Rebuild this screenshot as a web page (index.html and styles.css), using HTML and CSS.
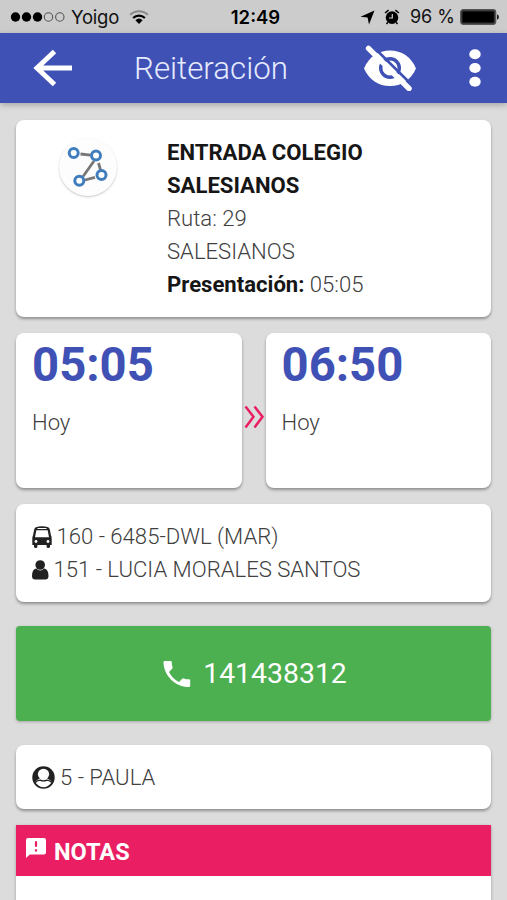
FILE: index.html
```html
<!DOCTYPE html>
<html lang="es">
<head>
<meta charset="utf-8">
<meta name="viewport" content="width=device-width, initial-scale=1">
<title>Reiteración</title>
<link rel="stylesheet" href="styles.css">
</head>
<body>
<div class="status">
  <div class="carrier">
    <svg class="signal" width="56" height="12" viewBox="0 0 56 12"><g fill="#000"><circle cx="5.5" cy="6" r="4.700"/><circle cx="16.500" cy="6" r="4.700"/><circle cx="27.500" cy="6" r="4.700"/></g><g fill="none" stroke="#555" stroke-width="1.100"><circle cx="38.500" cy="6" r="4.200"/><circle cx="49.800" cy="6" r="4.200"/></g></svg>
    <span class="carrier-name">Yoigo</span>
    <svg class="wifi" width="20" height="15" viewBox="0 0 20 15"><g fill="none" stroke-width="2.100"><path d="M1.200 4.800a12.800 12.800 0 0 1 17.600 0" stroke="#888"/><path d="M4.100 8a8.600 8.600 0 0 1 11.800 0" stroke="#000"/></g><path d="M6.400 10.200a5.400 5.400 0 0 1 7.200 0L10 14z"/></svg>
  </div>
  <span class="clock">12:49</span>
  <div class="power">
    <svg width="15" height="15" viewBox="0 0 15 15"><path d="M14.500.5 9 14.500 7.600 7.500.5 6.800z"/></svg>
    <svg class="alarm" width="16" height="16" viewBox="0 0 16 16"><circle cx="8" cy="8.600" r="6.300"/><path d="M1 4 4.600 1.200M11.400 1.200l3.600 2.800M3.800 13.300 2.600 15M12.200 13.300l1.200 1.700" stroke="#000" stroke-width="1.500"/><path d="M8.300 5v4H5" fill="none" stroke="#ccc" stroke-width="1.200"/></svg>
    <span class="percent">96 %</span>
    <svg width="40" height="16" viewBox="0 0 40 16"><rect x=".7" y=".7" width="35" height="14.600" rx="2.500" fill="#333" stroke="#555" stroke-width="1.200"/><rect x="2.500" y="2.500" width="31.400" height="11" rx="1"/><path d="M37 5.200q2 .6 2 2.800t-2 2.800z" fill="#222"/></svg>
  </div>
</div>
<header class="bar">
  <svg class="back" width="40" height="38" viewBox="0 0 40 38"><path d="M21.500 2.500 4 19l17.500 16.500M4 19h35" fill="none" stroke="#fff" stroke-width="5"/></svg>
  <h1>Reiteración</h1>
  <svg class="eye" width="54" height="46" viewBox="0 0 54 46"><path d="M1 23.500C6 11.500 15.500 5.500 27 5.500s21 6 26 18C48 35 38.500 41 27 41S6 35 1 23.500z" fill="#fff"/><circle cx="27" cy="23" r="9.300" fill="none" stroke="#3f51b5" stroke-width="3.400"/><path d="M9.500 1 51 42" stroke="#3f51b5" stroke-width="2.600"/><path d="M5.500 3.300 46 43.500" stroke="#fff" stroke-width="5.400" stroke-linecap="round"/></svg>
  <svg class="more" width="12" height="38" viewBox="0 0 12 38" fill="#fff"><ellipse cx="6" cy="5.200" rx="5.700" ry="5"/><ellipse cx="6" cy="19" rx="5.700" ry="5"/><ellipse cx="6" cy="32.800" rx="5.700" ry="5"/></svg>
</header>
<main>
  <section class="card route">
    <div class="badge"><svg width="58" height="58" viewBox="0 0 58 58"><path d="m21.500 16 10 1.200M35 23 24 38.500M39.500 25l2 7M26 42l10-2.700" stroke="#777" stroke-width="2.800" fill="none"/><g fill="#fff" stroke="#407dbd" stroke-width="3"><circle cx="14.700" cy="15" r="4.500"/><circle cx="37" cy="17.500" r="4.500"/><circle cx="42.500" cy="37" r="4.500"/><circle cx="20.300" cy="42.700" r="4.500"/></g></svg></div>
    <div class="info">
      <b class="name">ENTRADA COLEGIO SALESIANOS</b>
      <div>Ruta: 29</div>
      <div>SALESIANOS</div>
      <div><b>Presentación:</b> 05:05</div>
    </div>
  </section>
  <div class="times">
    <section class="card time"><strong>05:05</strong><span>Hoy</span></section>
    <svg class="next" width="24" height="24" viewBox="0 0 24 24"><path d="m3.500 1.500 8 10.300-8 10.700M12.500 1.500l8 10.300-8 10.700" fill="none" stroke="#e91e63" stroke-width="2.500"/></svg>
    <section class="card time"><strong>06:50</strong><span>Hoy</span></section>
  </div>
  <section class="card crew">
    <div class="row bus"><svg width="20" height="22" viewBox="0 0 20 22" fill="#212121"><path d="M3.800 1.300Q10-1 16.200 1.300q1.300.7 1.600 2.200L19 9.500q.7 1 .7 3V19H18v2q-.3.900-1.700.900t-1.700-.9v-2H5.400v2q-.3.900-1.700.900T2 21v-2H.3v-6.500q0-2 .7-3l1.200-6Q2.500 2 3.800 1.300z"/><path d="M5.500 2.500h9" stroke="#fff" stroke-width="1"/><path d="M4.300 4.300h11.400l1.300 6.900H3z" fill="#fff"/><circle cx="4" cy="15.500" r="1.400" fill="#fff"/><circle cx="16" cy="15.500" r="1.400" fill="#fff"/></svg><span>160 - 6485-DWL (MAR)</span></div>
    <div class="row driver"><svg width="17" height="20" viewBox="0 0 17 20" fill="#212121"><circle cx="8.200" cy="5" r="4.800"/><path d="M4.200 8.500Q8.200 12.300 12.200 8.500q4.300.8 4.300 7.500 0 3.500-3.300 3.500h-10Q0 19.500 0 16q0-6.700 4.200-7.500z"/></svg><span>151 - LUCIA MORALES SANTOS</span></div>
  </section>
  <button class="call" type="button"><svg width="28" height="28" viewBox="0 0 28 28"><path d="M1.500 1h6.200q1 0 1 1 0 2.800.9 5.200.2.900-.4 1.500L6 12q3.300 6.700 10 10l3.200-3.200q.7-.6 1.600-.4 2.400.9 5.200.9 1.200 0 1.200 1.200v5q0 1.500-1.400 1.500C12.200 27 .8 15.500.5 2.200Q.5 1 1.500 1z" fill="#fff"/></svg><span>141438312</span></button>
  <section class="card guide">
    <div class="row"><svg width="23" height="23" viewBox="0 0 23 23"><circle cx="11.500" cy="11.500" r="11.200" fill="#212121"/><circle cx="11.500" cy="8.300" r="5.600" fill="#fff"/><path d="M8.300 12.500Q5 13.300 3.600 15.500L4.200 17.200Q7.300 21.300 11.500 21.300T18.800 17.200L19.400 15.500Q18 13.300 14.700 12.500z" fill="#fff"/><path d="M3.500 16.200q2-1.900 4.700-2.100 3.300 1.700 6.600 0 2.700.2 4.700 2.100" fill="none" stroke="#212121" stroke-width="1.200"/></svg><span>5 - PAULA</span></div>
  </section>
  <section class="notes">
    <h2><svg width="20" height="20" viewBox="0 0 20 20"><path d="M2 0h16q2 0 2 2v12.500q0 2-2 2H3.800L0 20V2Q0 0 2 0z" fill="#fff"/><path d="M10 3.300v5.400M10 11.200v2.200" stroke="#e91e63" stroke-width="2.200"/></svg><span>NOTAS</span></h2>
    <div class="notes-body"></div>
  </section>
</main>
</body>
</html>
```
FILE: styles.css
```css
* { box-sizing: border-box; }
body {
  margin: 0;
  height: 900px;
  overflow: hidden;
  background: #dcdcdc;
  color: #404040;
  font: 300 22.1px/33px Roboto, sans-serif;
}
svg { display: block; flex: none; }
b { color: #161616; font-weight: 700; }
.status {
  display: grid;
  grid-template-columns: 1fr auto 1fr;
  align-items: center;
  height: 33px;
  padding: 1px 7px 0 10px;
  background: #ccc;
  color: #111;
  font: 400 18.5px/32px Inter, sans-serif;
}
.carrier, .power { display: flex; align-items: center; }
.carrier-name { margin: 0 10px 0 5px; letter-spacing: -.2px; }
.clock { padding-left: 1px; font-weight: 600; color: #000; }
.power { justify-content: flex-end; }
.alarm { margin: 0 10px 0 9px; }
.percent { margin-right: 5px; font-size: 18px; }
.bar {
  display: flex;
  align-items: center;
  height: 70px;
  padding: 0 26px 0 33px;
  background: #3f51b5;
  box-shadow: 0 2px 6px rgba(0, 0, 0, .25);
}
.bar h1 { margin: 1px 0 0 61px; font-size: 31.3px; font-weight: 300; line-height: 40px; color: #e6ebff; }
.eye { margin-left: auto; }
.more { margin-left: 52px; }
main { display: flex; flex-direction: column; padding: 17px 16px 0; }
.card { background: #fff; border-radius: 8px; box-shadow: 0 2px 3px rgba(0, 0, 0, .35); }
.route { display: flex; height: 197px; padding: 15px 16px; }
.badge { width: 58px; height: 58px; margin: 3px 50px 0 27px; border-radius: 50%; background: #fdfdfd; box-shadow: 0 1px 2px rgba(0, 0, 0, .22); }
.info { width: 230px; padding-top: .5px; line-height: 33.2px; }
.name { display: block; }
.times { display: flex; align-items: center; margin-top: 16px; }
.time { display: flex; flex-direction: column; flex: 1; height: 155px; padding: 4px 16px; }
.time strong { font-size: 47.3px; line-height: 56px; font-weight: 700; color: #3f51b5; }
.time span { margin-top: 13px; }
.next { margin-top: 12px; }
.crew { height: 98px; margin-top: 16px; padding: 16px; }
.row { display: flex; align-items: center; gap: 5px; }
.bus, .driver { gap: 4.5px; }
.call {
  display: flex;
  align-items: center;
  justify-content: center;
  gap: 12px;
  height: 95px;
  margin: 24px 0;
  border: 0;
  border-radius: 4px;
  background: #4caf50;
  box-shadow: 0 1px 3px rgba(0, 0, 0, .25);
  color: #fff;
  font: 400 28.4px/36px Roboto, sans-serif;
}
.call svg { margin-left: 3px; }
.guide { height: 64px; padding: 16px; }
.notes { margin-top: 16px; box-shadow: 0 1px 3px rgba(0, 0, 0, .3); }
.notes h2 { display: flex; align-items: center; gap: 8px; height: 51px; margin: 0; padding: 0 10px; background: #e91e63; color: #fff; font-size: 23.5px; font-weight: 700; }
.notes h2 svg { margin-bottom: 5px; }
.notes h2 span { padding-top: 4px; }
.notes-body { height: 60px; background: #fff; }
```
